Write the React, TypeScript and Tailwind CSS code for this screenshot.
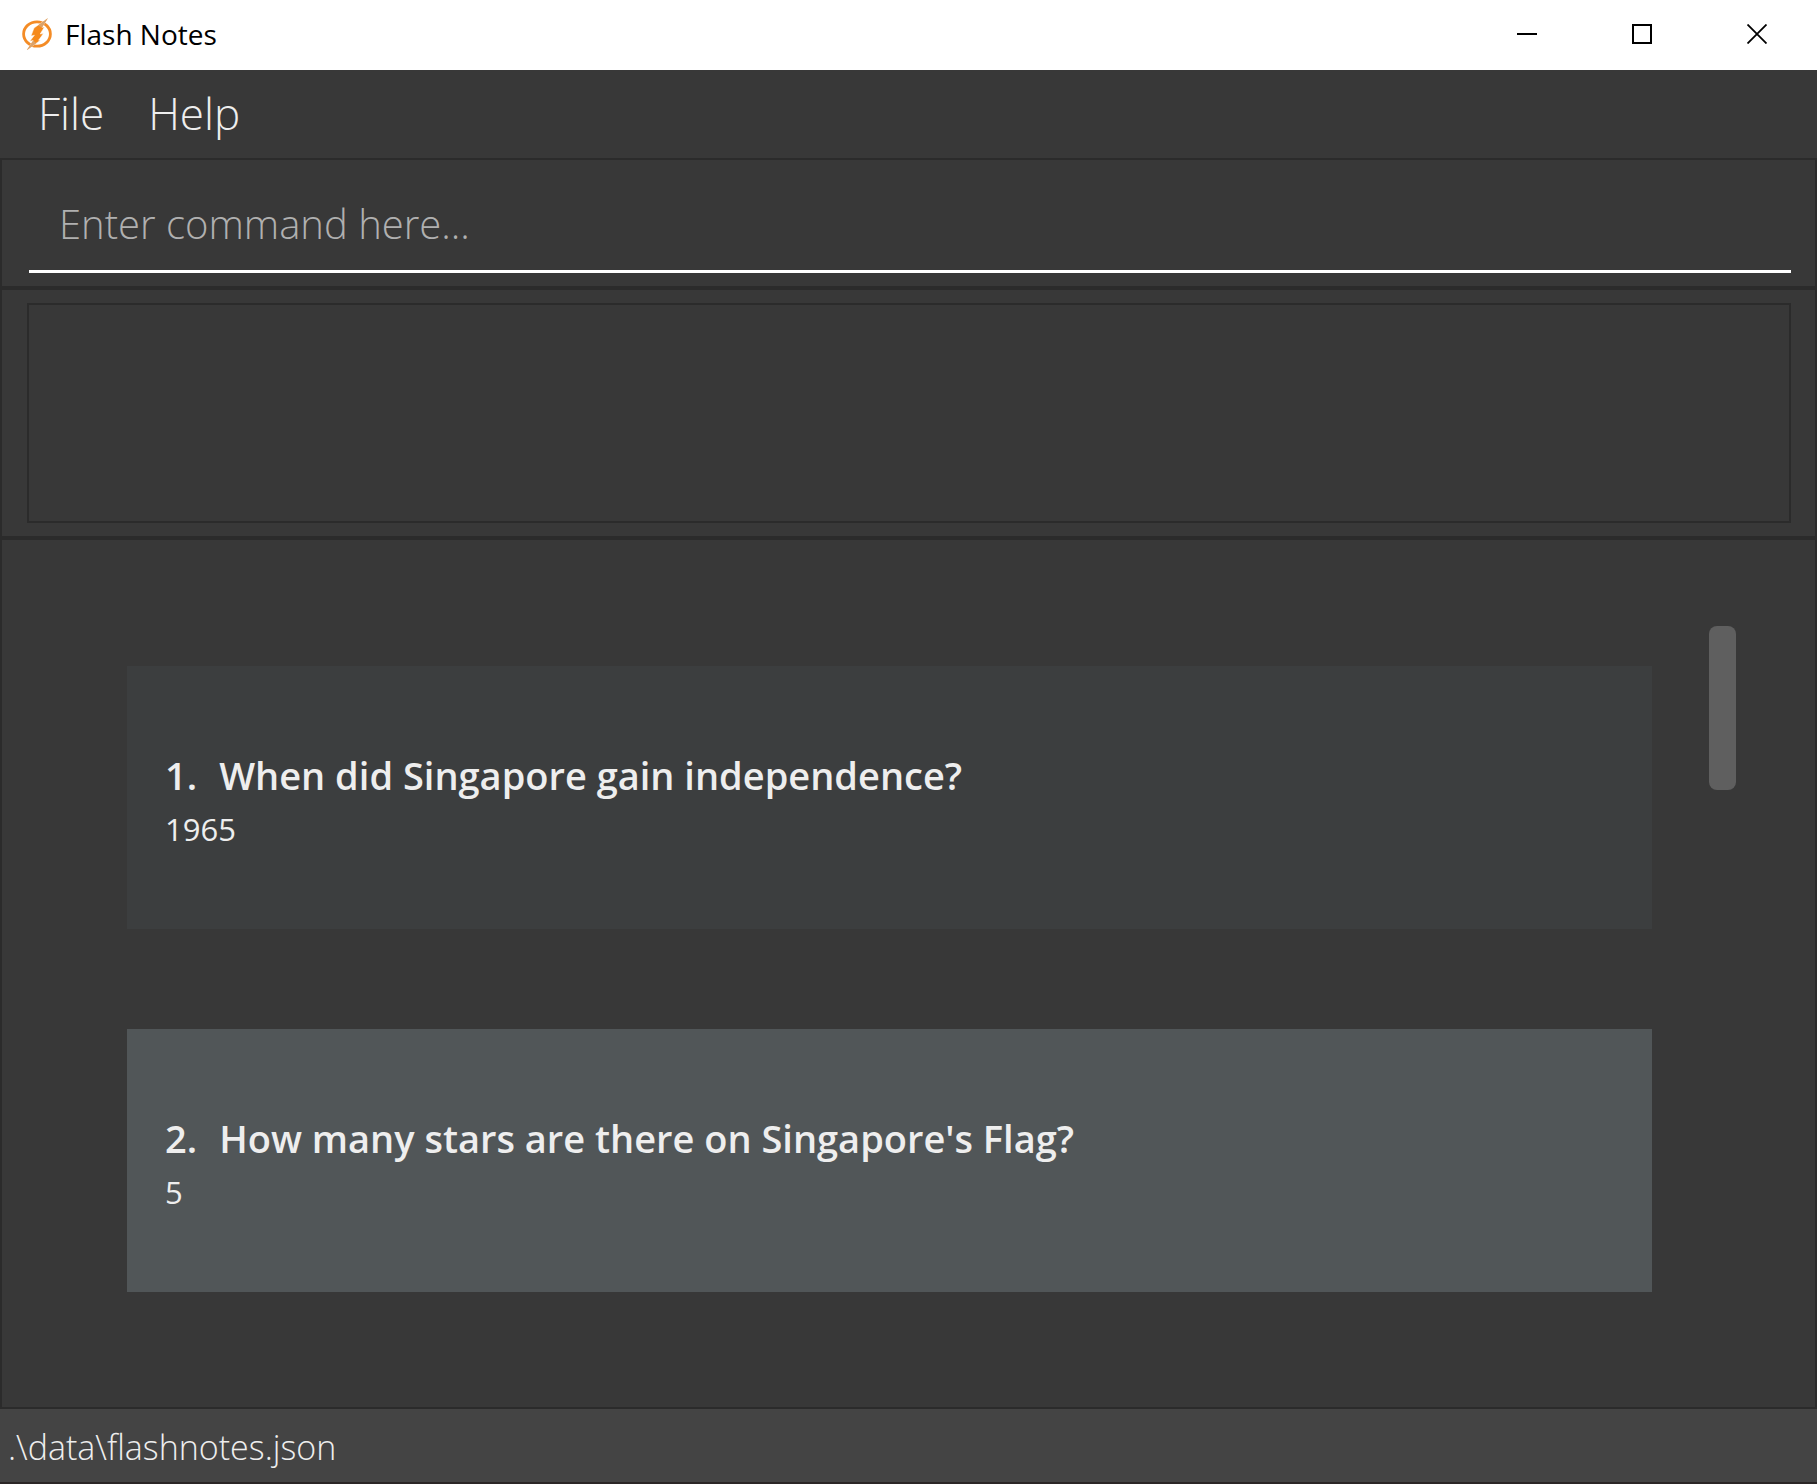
type Card = { id: number; question: string; answer: string; tone: string };

const cards: Card[] = [
  { id: 1, question: "When did Singapore gain independence?", answer: "1965", tone: "bg-[#3c3e3f]" },
  { id: 2, question: "How many stars are there on Singapore's Flag?", answer: "5", tone: "bg-[#515658]" },
];

function FlashLogo() {
  return (
    <svg className="size-8" viewBox="0 0 32 32" aria-hidden="true">
      <ellipse cx="16" cy="16" rx="13.4" ry="12.2" fill="none" stroke="#f48c26" strokeWidth="2.8" />
      <path
        d="M27 0 L13 10 L10 18 L13.4 17.2 L8.8 23.2 L12.2 22.6 L5.5 32.5 L19.4 22.2 L17.6 22.2 L22.4 15.6 L19.2 16 L23.4 9 L21 9.4 Z"
        fill="#f58a1c"
        stroke="#fff"
        strokeWidth="0.5"
      />
      <path d="M21 9.4 L27 0 L17 7.4 Z M12.2 22.6 L5.5 32.5 L15.2 25.2 Z" fill="#dba36b" />
    </svg>
  );
}

function TitleBar() {
  return (
    <header className="flex h-[70px] items-center bg-white pr-0.5 pb-0.5 pl-[21px] text-black">
      <FlashLogo />
      <h1 className="ml-3 flex-1 text-[28px] leading-9">Flash Notes</h1>
      <div className="flex h-full">
        <button aria-label="Minimize" className="flex w-[115px] items-center justify-center">
          <svg className="size-5" viewBox="0 0 20 20"><path d="M0 10H20" stroke="#000" strokeWidth="2" /></svg>
        </button>
        <button aria-label="Maximize" className="flex w-[115px] items-center justify-center">
          <svg className="size-5" viewBox="0 0 20 20"><path d="M1 1H19V19H1Z" fill="none" stroke="#000" strokeWidth="2" /></svg>
        </button>
        <button aria-label="Close" className="flex w-[116px] items-center justify-center">
          <svg className="size-5" viewBox="0 0 20 20"><path d="M0.5 0.5L19.5 19.5M19.5 0.5L0.5 19.5" stroke="#000" strokeWidth="1.8" /></svg>
        </button>
      </div>
    </header>
  );
}

export default function App() {
  return (
    <div className="flex min-h-screen flex-col bg-[#383838] font-['Open_Sans',sans-serif]">
      <TitleBar />
      <nav className="flex h-[88px] items-center gap-11 px-[38px] pb-0.5 text-[44px] leading-[60px] font-light text-[#eeeeee]">
        <button>File</button>
        <button>Help</button>
      </nav>

      <form className="border-2 border-[#2b2b2b] pt-[22px] pr-6 pb-[13px] pl-[27px]">
        <input
          aria-label="Command"
          placeholder="Enter command here..."
          className="h-[91px] w-full border-b-3 border-white bg-transparent px-[30px] pb-1.5 text-[40px] font-light text-white outline-none placeholder:text-[#b0b0b0] placeholder:opacity-100"
        />
      </form>

      <section className="border-2 border-[#2b2b2b] py-[13px] pr-6 pl-[25px]" aria-label="Result">
        <output className="block h-[220px] border-2 border-[#2b2b2b]" />
      </section>

      <main className="flex flex-1 items-start border-2 border-[#2b2b2b] pt-[86px] pr-[79px] pb-[90px] pl-[125px]">
        <ol className="flex flex-1 flex-col gap-[100px] pt-10">
          {cards.map((card) => (
            <li key={card.id} className={`h-[263px] px-[38px] pt-[82px] text-[#eeeeee] ${card.tone}`}>
              <h2 className="flex gap-[22px] text-[38px] leading-[54px] font-semibold">
                <span>{card.id}.</span>
                <span>{card.question}</span>
              </h2>
              <p className="text-[31px] leading-[54px]">{card.answer}</p>
            </li>
          ))}
        </ol>
        <div className="ml-[57px] h-[164px] w-[27px] rounded-lg bg-[#5f5f5f]" />
      </main>

      <footer className="flex h-[75px] items-center border-b-2 border-[#2b2627] bg-[#444444] px-2 pt-0.5 text-[34px] leading-[50px] font-light text-[#eeeeee]">
        .\data\flashnotes.json
      </footer>
    </div>
  );
}
